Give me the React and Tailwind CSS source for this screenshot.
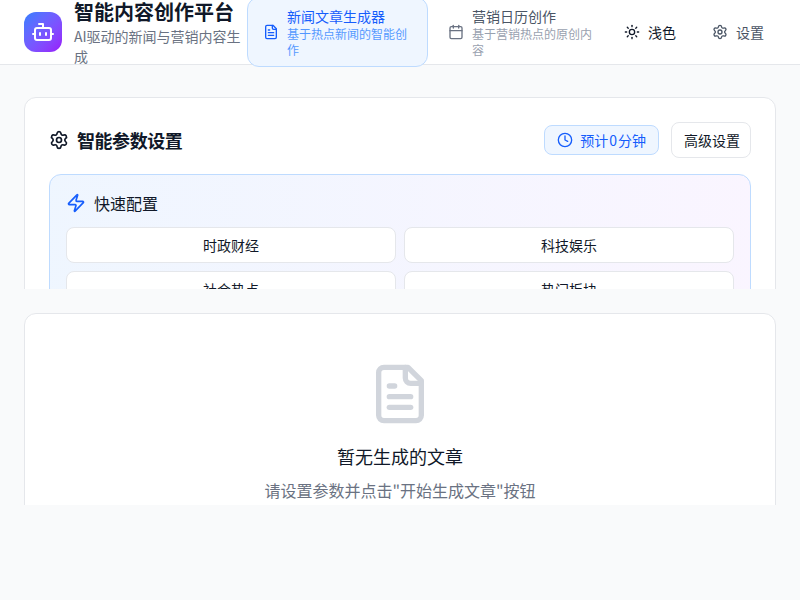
import React from "react";
import { Bot, Calendar, Sun, Settings, Clock, Zap } from "lucide-react";

function DocIcon({ className }) {
  return (
    <svg className={className} viewBox="0 0 24 24" fill="none" stroke="currentColor" strokeWidth="2" strokeLinecap="round" strokeLinejoin="round">
      <path d="M15 2H6a2 2 0 0 0-2 2v16a2 2 0 0 0 2 2h12a2 2 0 0 0 2-2V7Z" />
      <path d="M14 2v4a2 2 0 0 0 2 2h4" />
      <path d="M10 9H8" />
      <path d="M16 13H8" />
      <path d="M16 17H8" />
    </svg>
  );
}

function Tab({ active, icon: Icon, title, desc }) {
  return (
    <button className={`flex w-[181px] shrink-0 items-center gap-2 rounded-xl border px-[15px] py-2 text-left ${active ? "border-blue-200 bg-blue-50" : "border-transparent"}`}>
      <Icon className={`h-4 w-4 shrink-0 ${active ? "text-blue-600" : "text-gray-500"}`} />
      <span className="flex min-w-0 flex-col">
        <span className={`text-sm leading-5 ${active ? "text-blue-600" : "text-gray-600"}`}>{title}</span>
        <span className={`text-xs leading-4 ${active ? "text-blue-500/80" : "text-gray-400"}`}>{desc}</span>
      </span>
    </button>
  );
}

function Preset({ children }) {
  return (
    <button className="h-9 rounded-lg border border-gray-200 bg-white text-sm text-gray-900">{children}</button>
  );
}

export default function App() {
  return (
    <div className="min-h-screen bg-gray-50 font-['Noto_Sans_CJK_SC','Inter',sans-serif] text-gray-900">
      <header className="h-[65px] border-b border-gray-200 bg-white">
        <div className="flex h-16 items-center justify-between px-6">
          <div className="flex items-center gap-3">
            <div className="flex h-10 w-[38px] shrink-0 items-center justify-center rounded-xl bg-gradient-to-br from-blue-500 to-purple-600">
              <Bot className="h-6 w-6 text-white" />
            </div>
            <div className="w-[170px] shrink-0">
              <div className="whitespace-nowrap text-xl font-bold leading-7">智能内容创作平台</div>
              <div className="text-sm leading-5 text-gray-500">AI驱动的新闻与营销内容生成</div>
            </div>
          </div>
          <nav className="ml-[3px] flex min-w-0 flex-1 items-center gap-1">
            <Tab active icon={DocIcon} title="新闻文章生成器" desc="基于热点新闻的智能创作" />
            <Tab icon={Calendar} title="营销日历创作" desc="基于营销热点的原创内容" />
          </nav>
          <div className="flex shrink-0 items-center">
            <button className="flex h-9 items-center gap-2 whitespace-nowrap pl-1 pr-3 text-sm text-gray-900">
              <Sun className="h-4 w-4" />
              浅色
            </button>
            <button className="ml-3 flex h-9 items-center gap-2 whitespace-nowrap px-3 text-sm text-gray-600">
              <Settings className="h-4 w-4" />
              设置
            </button>
          </div>
        </div>
      </header>

      <main className="flex flex-col gap-6 px-6 py-8">
        <div className="h-[192px] overflow-hidden">
          <section className="rounded-xl border border-gray-200 bg-white p-6">
            <div className="flex items-center justify-between">
              <div className="flex items-center gap-2">
                <Settings className="h-5 w-5" />
                <h2 className="text-lg font-semibold leading-7 tracking-tight">智能参数设置</h2>
              </div>
              <div className="flex items-center gap-3">
                <div className="flex h-[30px] items-center gap-[7px] rounded-lg border border-blue-200 bg-blue-50 px-3 text-sm text-blue-600">
                  <Clock className="h-4 w-4" />
                  <span>预计<span className="mx-px">0</span>分钟</span>
                </div>
                <button className="h-9 rounded-lg border border-gray-200 bg-white pl-3 pr-[10px] text-sm text-gray-900">高级设置</button>
              </div>
            </div>
            <div className="mt-4 rounded-xl border border-blue-200 bg-gradient-to-r from-blue-50 to-purple-50 p-4">
              <div className="flex items-center gap-2">
                <Zap className="h-5 w-5 text-blue-600" />
                <span className="text-base leading-6">快速配置</span>
              </div>
              <div className="mt-3 grid grid-cols-2 gap-2">
                <Preset>时政财经</Preset>
                <Preset>科技娱乐</Preset>
                <Preset>社会热点</Preset>
                <Preset>热门板块</Preset>
              </div>
            </div>
          </section>
        </div>

        <div className="h-[192px] overflow-hidden">
          <section className="rounded-xl border border-gray-200 bg-white py-12 text-center">
            <DocIcon className="mx-auto h-16 w-16 text-gray-300" />
            <h3 className="mt-4 text-lg font-normal leading-7">暂无生成的文章</h3>
            <p className="mt-2 text-base leading-6 text-gray-500">请设置参数并点击"开始生成文章"按钮</p>
          </section>
        </div>
      </main>
    </div>
  );
}
